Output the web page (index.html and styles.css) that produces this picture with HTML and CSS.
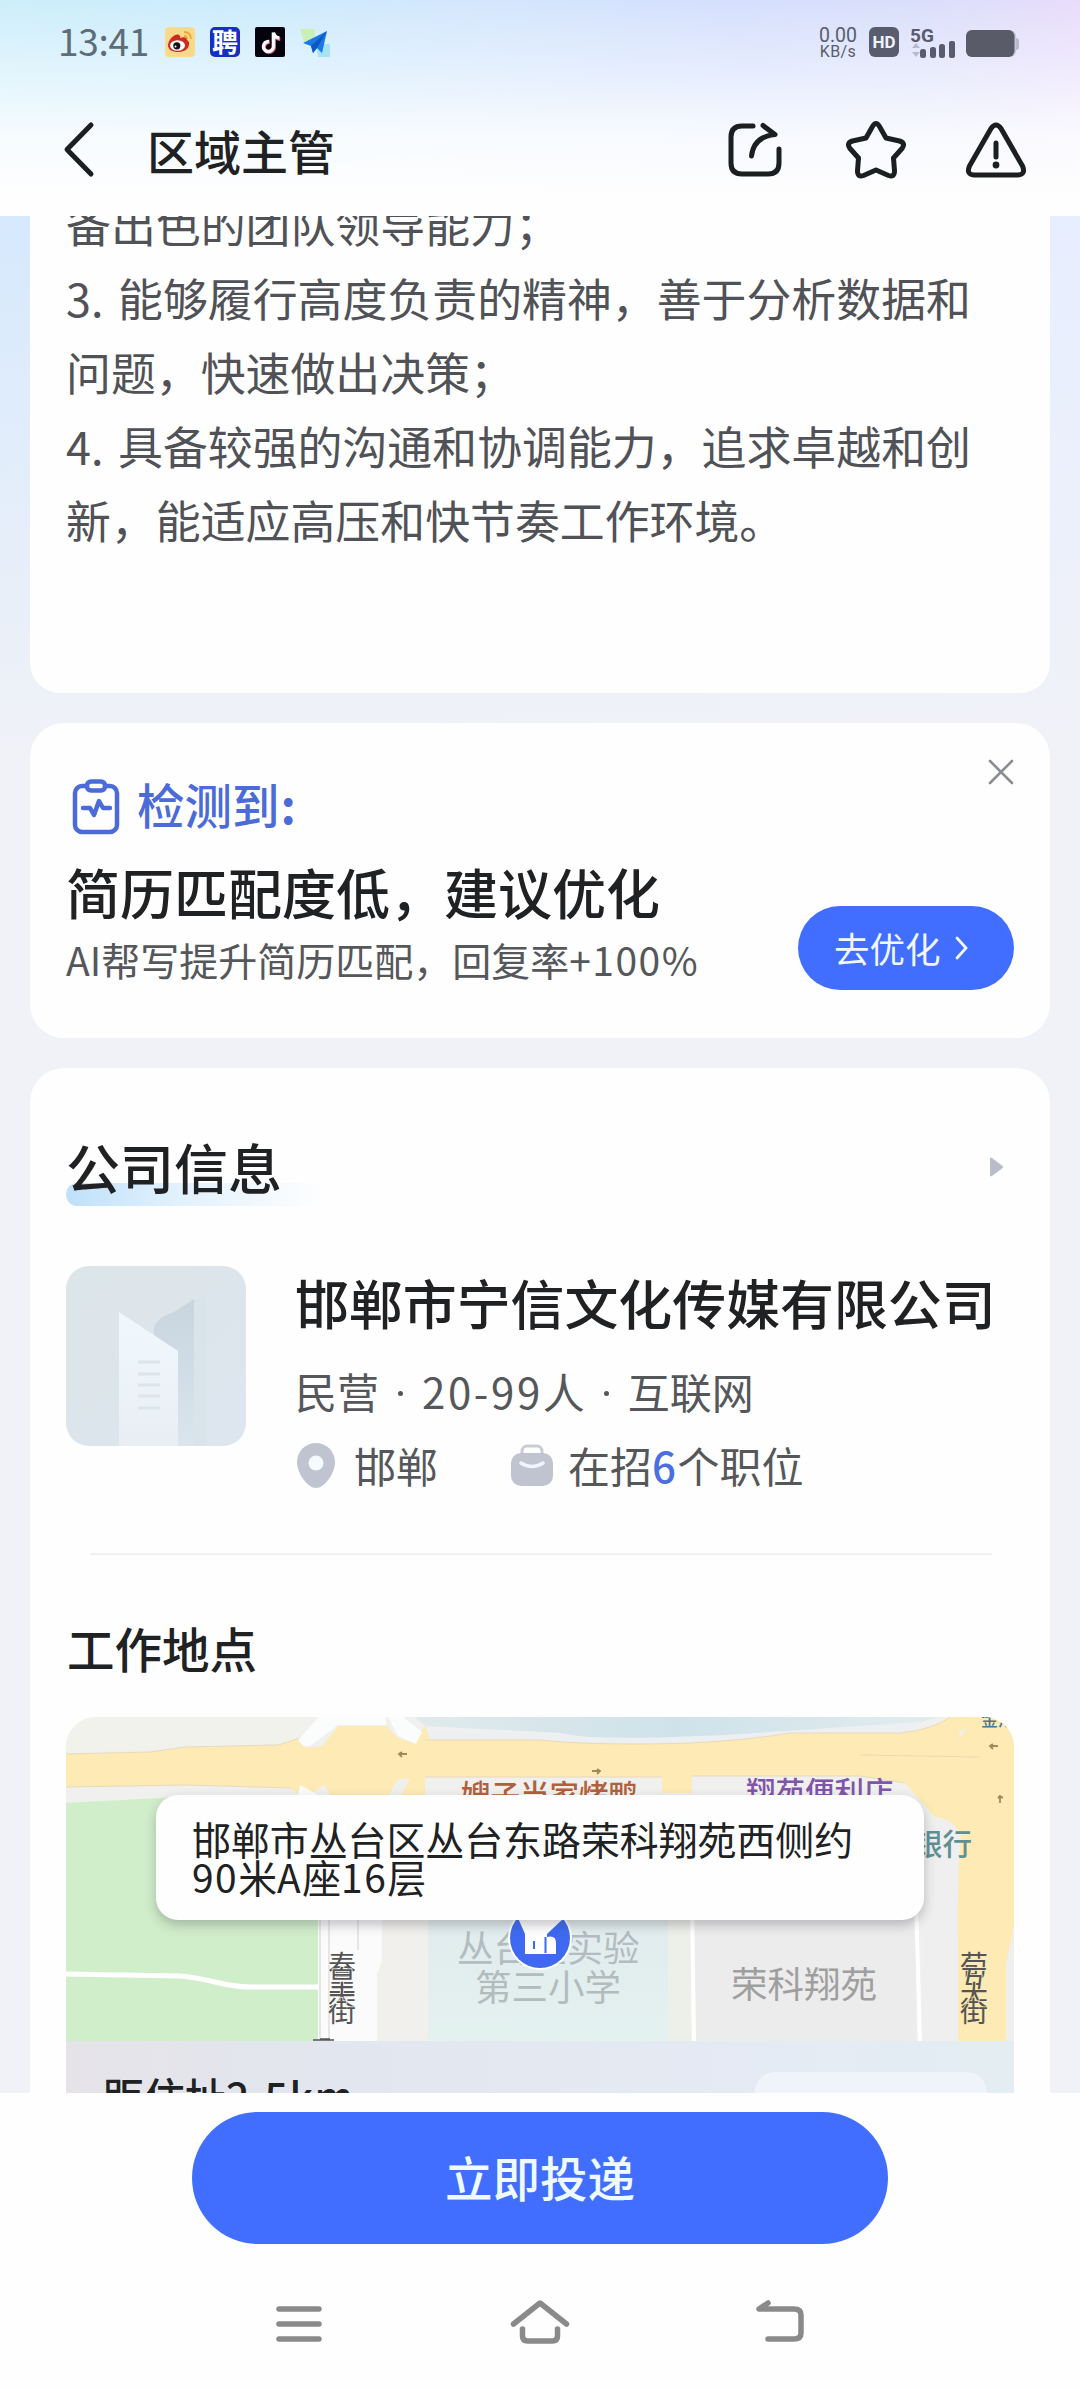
FILE: index.html
```html
<!DOCTYPE html>
<html lang="zh-CN">
<head>
<meta charset="utf-8">
<title>区域主管</title>
<link rel="stylesheet" href="styles.css">
</head>
<body>
<div class="screen">
  <header class="top">
    <div class="status">
      <span class="clock">13:41</span>
      <svg class="app" viewBox="0 0 30 30"><rect width="30" height="30" rx="4" fill="#fbd98b"/><path d="M19 5q7 0 7 7M19 9q3 0 3 3" fill="none" stroke="#f0a63a" stroke-width="1.8"/><path d="M3 18C4 12 10 6 14 8q2 1 1 3 6-2 7 2 3 2 2 5c-1 5-6 7-11 7S3 23 3 18z" fill="#cf2a20"/><ellipse cx="12.5" cy="18.5" rx="7.5" ry="5.2" fill="#fff"/><circle cx="11.8" cy="18.8" r="3.6" fill="#111"/><circle cx="10.5" cy="19.6" r="1" fill="#fff"/></svg>
      <span class="app app-pin">聘</span>
      <svg class="app" viewBox="0 0 30 30"><rect width="30" height="30" rx="2" fill="#04030d"/><g fill="none" stroke-width="3.4"><path d="M14 14.5a5 5 0 1 0 4.4 5V6q1 5 6 5.500" stroke="#f0486a" transform="translate(.9 .8)"/><path d="M14 14.500a5 5 0 1 0 4.400 5V5.500q1 5 6 5.500" stroke="#fff"/></g></svg>
      <svg class="app" viewBox="0 0 30 30"><path d="M0 2h15v15H5z" fill="#c8efb5"/><path d="M16 17h14v13H18z" fill="#a5e3f4"/><path d="M3 16 27 4 22 26 17 21 13 26 11 19z" fill="#1978e6"/><path d="M27 4 11 19 13 26 17 21z" fill="#0d58c0"/></svg>
      <div class="net"><span class="net-num">0.00</span><span class="net-unit">KB/s</span></div>
      <span class="hd">HD</span>
      <svg class="signal" viewBox="0 0 45 31"><text x="-1" y="15" class="g5">5G</text><path d="M1 21l4-5 4 5zM1 25l4 5 4-5z" fill="#b6bacd"/><g fill="#595c6c"><rect x="9" y="22" width="6" height="9" rx="2.500"/><rect x="19" y="20" width="6" height="11" rx="2.500"/><rect x="28" y="17" width="6" height="14" rx="2.500"/><rect x="38" y="14" width="6" height="17" rx="2"/></g></svg>
      <svg class="battery" viewBox="0 0 54 27"><rect x="44" y="8" width="9" height="12" rx="3" fill="#b9bac9"/><rect width="50" height="27" rx="6" fill="#c6c7d8"/><rect width="48.500" height="27" rx="6" fill="#595b68"/></svg>
    </div>
    <div class="nav">
      <svg class="back" viewBox="0 0 34 58"><path d="M29 4 5 28.500 29 53" /></svg>
      <h1>区域主管</h1>
      <svg class="act" viewBox="0 0 62 62"><path d="M28 7H17Q6 7 6 18v26q0 11 11 11h26q11 0 11-11V30M38 6.500 50 15.500C36 17 28 24 26.500 37"/></svg>
      <svg class="act" viewBox="0 0 62 62"><path d="M27.500 7.500Q31 1.500 34.500 7.500L41 19 54.500 22Q61 24 57 29.500L48.500 39 49.500 52Q49.500 58.500 43.500 56.500L31 51 18.500 56.500Q12.500 58.500 12.500 52L13.500 39 5 29.500Q1 24 7.500 22L21 19z"/></svg>
      <svg class="act" viewBox="0 0 62 62"><path d="M26 9.500Q31 2.500 36 9.500L57.500 47Q61 55.500 53 56H9Q1 55.500 4.500 47z"/><path d="M31 24V38" stroke-width="6"/><circle cx="31" cy="46" r="3.400" class="dot"/></svg>
    </div>
  </header>

  <main class="feed">
    <section class="card duty">
      <p>备出色的团队领导能力；</p>
      <p><span class="num">3. </span>能够履行高度负责的精神，善于分析数据和</p>
      <p>问题，快速做出决策；</p>
      <p><span class="num">4. </span>具备较强的沟通和协调能力，追求卓越和创</p>
      <p>新，能适应高压和快节奏工作环境。</p>
    </section>

    <section class="card tip">
      <div class="tip-text">
        <div class="tip-head">
          <svg viewBox="0 0 48 56"><g fill="none" stroke="#4a6bd8" stroke-width="4.500" stroke-linecap="round" stroke-linejoin="round"><rect x="3" y="7" width="42" height="46" rx="7"/><path d="M11 29h7l4 7 5-14 4 7h7" stroke-width="4.500"/><rect x="15" y="2.500" width="18" height="9" rx="4" fill="#fff"/></g></svg>
          <span>检测到<b>:</b></span>
        </div>
        <h2>简历匹配度低，建议优化</h2>
        <p>AI帮写提升简历匹配，回复率<span class="wide">+100%</span></p>
      </div>
      <a class="optimize">去优化<svg viewBox="0 0 14 24"><path d="M2 2 11 12 2 22"/></svg></a>
      <svg class="close" viewBox="0 0 26 26"><path d="M2 2 24 24M24 2 2 24"/></svg>
    </section>

    <section class="card company">
      <div class="sec-head">
        <h2>公司信息</h2>
        <svg viewBox="0 0 15 20"><path d="M1 1.500Q1 0 3 1L13 8.500Q15 10 13 11.500L3 19Q1 20 1 18z" fill="#b9bdca"/></svg>
      </div>
      <div class="firm">
        <svg class="logo" viewBox="0 0 180 180">
          <defs>
            <linearGradient id="lg" x2="1" y2="1"><stop stop-color="#dce5e8"/><stop offset="1" stop-color="#dde5ef"/></linearGradient>
            <linearGradient id="tw" x2="0" y2="1"><stop stop-color="#f0f8fe"/><stop offset="1" stop-color="#e9eef3"/></linearGradient>
            <linearGradient id="sh" x2="0" y2="1"><stop stop-color="#c8d5de"/><stop offset="1" stop-color="#dae5ee"/></linearGradient>
          </defs>
          <rect width="180" height="180" rx="23" fill="url(#lg)"/>
          <path d="M88 62Q90 52 108 46L128 33V180H88z" fill="url(#sh)"/>
          <path d="M128 33 140 30V180H128z" fill="#d8e4ea"/>
          <path d="M53 46 112 85V180H53z" fill="url(#tw)"/>
          <path d="M72 96H94M72 108H94M72 119H94M72 130H94M72 142H94" stroke="#dce4ec" stroke-width="3"/>
        </svg>
        <div class="firm-info">
          <h3>邯郸市宁信文化传媒有限公司</h3>
          <p class="facts">民营<i></i><span class="lat">20-99</span>人<i></i>互联网</p>
          <p class="facts">
            <svg class="pin" viewBox="0 0 38 45"><path d="M19 0A19 19 0 0 1 38 19C38 31 27 45 19 45S0 31 0 19A19 19 0 0 1 19 0z" fill="#bfc4d0"/><circle cx="19" cy="20" r="7.500" fill="#f5faff"/></svg>
            <span class="city">邯郸</span>
            <svg class="bag" viewBox="0 0 42 42"><rect x="11" y="2" width="20" height="14" rx="5" fill="none" stroke="#c9cdd3" stroke-width="3"/><rect y="9" width="42" height="33" rx="10" fill="#bfc4d0"/><path d="M10 19Q21 26 32 19" fill="none" stroke="#eef6fb" stroke-width="3.500" stroke-linecap="round"/></svg>
            <span>在招<em>6</em>个职位</span>
          </p>
        </div>
      </div>
      <hr>
      <h4>工作地点</h4>
      <div class="map">
        <svg class="tiles" viewBox="66 1717 948 324">
          <defs>
            <linearGradient id="wt" x1="0" x2="1"><stop stop-color="#e0eaec"/><stop offset=".5" stop-color="#cfe2ea"/><stop offset="1" stop-color="#e2ecee"/></linearGradient>
            <linearGradient id="sc" x2="0" y2="1"><stop stop-color="#dfe8ec"/><stop offset="1" stop-color="#e3f1ef"/></linearGradient>
          </defs>
          <rect x="66" y="1717" width="948" height="324" fill="#f0f0ef"/>
          <path d="M66 1717H325L298 1742 180 1746 66 1752z" fill="#f2f2ed"/>
          <path d="M415 1717H940L900 1727Q780 1734 730 1738 620 1745 560 1733L425 1726z" fill="url(#wt)"/>
          <path d="M430 1731 560 1735Q620 1741 740 1734L920 1722 900 1735 720 1748H430z" fill="#ecf0f2"/>
          <path d="M66 1803 180 1797H318V2041H66z" fill="#d0eeca"/>
          <path d="M66 1974 180 1976C210 1978 222 1987 250 1987H318" fill="none" stroke="#fff" stroke-width="5"/>
          <rect x="318" y="1800" width="64" height="241" fill="#fbfbfb"/>
          <path d="M320 1800V2041M329 1900V2041M358 1900V1950" stroke="#dedfe2" stroke-width="1.500"/>
          <path d="M382 1800H428V2041H377V1975L382 1960z" fill="#f2f0ed"/>
          <rect x="428" y="1800" width="240" height="241" fill="url(#sc)"/>
          <rect x="668" y="1800" width="22" height="241" fill="#edefe9"/>
          <rect x="695" y="1800" width="221" height="241" fill="#ececec"/>
          <path d="M692 1900 694 2041M916 1900 920 2041" stroke="#fff" stroke-width="4"/>
          <rect x="922" y="1820" width="92" height="221" fill="#efeff0"/>
          <path d="M66 1754 150 1752 185 1747 278 1745 300 1738 306 1748 322 1746 338 1726H387L398 1738 414 1743 425 1725 430 1740H540Q600 1746 690 1743 750 1740 790 1733H900Q935 1729 950 1717H1014V1925Q1009 1952 1006 1965V2041H958V1950Q957 1880 961 1835 952 1818 935 1817 920 1800 905 1783L860 1776H692V1793H662V1777H425V1795H330L325 1785 310 1794H298L290 1788 185 1785 66 1787z" fill="#fdeab4"/>
          <path d="M66 1754 150 1752 185 1747 278 1745 300 1738M66 1787 185 1785 290 1788M425 1740H540Q600 1746 690 1743 750 1740 790 1733H900Q935 1729 950 1717M425 1777H662M692 1776H860L905 1783M860 1755 980 1757" fill="none" stroke="#ead9ba" stroke-width="1"/>
          <path d="M319 1717H337L304 1747 298 1740zM337 1717H386V1725H338L310 1746 304 1746zM388 1717H403L422 1732 416 1744 398 1736zM300 1785 318 1795H298z" fill="#fbfcfc"/>
          <path d="M388 1796 398 1779H410L401 1796zM958 1733 967 1727 961 1737z" fill="#efefec"/>
          <g fill="none" stroke="#9c8a5c" stroke-width="1.800"><path d="M399 1754H407M402 1752 399 1754 402 1757M592 1771H600M597 1769 600 1771 597 1774M990 1746H998M993 1744 990 1746 993 1749M1000 1803V1796M998 1798 1000 1796 1003 1798"/></g>
          <g class="poi">
            <text x="461" y="1806" fill="#b0603c">嫂子当家烤鸭</text>
            <text x="746" y="1803" fill="#8055a8">翔苑便利店</text>
            <text x="913" y="1855" fill="#5f8f92">银行</text>
            <text x="981" y="1726" class="tiny" fill="#4a7690">金港</text>
          </g>
          <g class="area">
            <text x="457" y="1962" fill="#b3bcc0">丛台区实验</text>
            <text x="475" y="2001" fill="#b3bcbd">第三小学</text>
            <text x="731" y="1998" fill="#9f9f9f">荣科翔苑</text>
          </g>
          <g class="street">
            <text x="328" y="1976">春</text><text x="328" y="1991">皇</text><text x="328" y="2006">夫</text><text x="328" y="2022">街</text>
            <g class="gold"><text x="960" y="1976">荀</text><text x="960" y="1991">互</text><text x="960" y="2006">大</text><text x="960" y="2022">街</text></g>
          </g>
          <path d="M313 2040H334M320 2039H330" stroke="#555" stroke-width="1.500"/>
          <circle cx="540" cy="1938" r="32" fill="#fff"/><circle cx="540" cy="1938" r="30" fill="#3e69f0"/>
          <path d="M518 1918H564L547 1934V1937Q556 1935 556 1943V1954H525V1934z" fill="#fff"/><path d="M534 1941V1949M545.500 1937V1953" stroke="#3e69f0" stroke-width="2"/>
        </svg>
        <div class="bubble">邯郸市丛台区丛台东路荣科翔苑西侧约<br><span class="lat">90</span>米<span class="lat">A</span>座<span class="lat">16</span>层</div>
        <div class="distance"><span>距住址<span class="wide">2.5km</span></span><div class="route"></div></div>
      </div>
    </section>
  </main>

  <footer class="bottom">
    <a class="apply">立即投递</a>
    <div class="keys">
      <svg viewBox="0 0 60 48"><path d="M9 11H49M9 26H49M9 41H49"/></svg>
      <svg viewBox="0 0 60 48"><path d="M3.500 26 30 5 56.500 26M12.500 31V38Q12.500 43 17.500 43H42.500Q47.500 43 47.500 38V31"/></svg>
      <svg viewBox="0 0 60 48"><path d="M18 5 9 11H44Q51 11 51 17V35Q51 41 44 41H18"/></svg>
    </div>
  </footer>
</div>
</body>
</html>
```

FILE: styles.css
```css
* { box-sizing: border-box; margin: 0; padding: 0; }
body {
  width: 1080px;
  font-family: "Noto Sans CJK SC", sans-serif;
  color: #202123;
}
h1, h2, h3, h4 { font-weight: 500; }
svg { display: block; flex: none; }
.screen { height: 2388px; display: flex; flex-direction: column; overflow: hidden; background: #fefefe; }

/* status bar and title */
.top {
  height: 216px;
  flex: none;
  background:
    linear-gradient(180deg, rgba(254,254,254,0) 0%, rgba(252,254,255,.5) 38%, rgba(253,254,255,.85) 62%, #fefefe 90%),
    linear-gradient(90deg, #cdeefb 0%, #cdebfd 25%, #d4e6fd 45%, #d5dffd 68%, #dadffb 85%, #e8dcfb 100%);
}
.status { height: 84px; padding: 0 60px 0 58px; display: flex; align-items: center; color: #595c6c; }
.clock { width: 92px; font-size: 37px; line-height: 40px; padding-bottom: 4px; color: #5c6c78; white-space: nowrap; letter-spacing: -.3px; }
.app { width: 30px; height: 30px; margin-left: 15px; }
.app-pin { border-radius: 5px; background: #1430c4; color: #fff; font-weight: 700; font-size: 26px; line-height: 28px; text-align: center; }
.net { margin-left: auto; width: 40px; margin-right: 11px; display: flex; flex-direction: column; align-items: center; padding-top: 1px; }
.net-num { font: 19.500px/17px Roboto, sans-serif; }
.net-unit { font: 16px/15px Roboto, sans-serif; letter-spacing: .4px; }
.hd { width: 30px; height: 30px; border-radius: 6px; background: #595c6c; color: #eef1fb; font: 700 17px/31px Roboto, sans-serif; text-align: center; }
.signal { width: 45px; height: 31px; margin-left: 12px; }
.g5 { font: 700 19px Roboto, sans-serif; fill: #595c6c; }
.battery { width: 54px; height: 27px; margin: 3px 0 0 10px; }
.nav { height: 132px; padding: 0 53px 0 62px; display: flex; align-items: center; }
.nav svg path { fill: none; stroke: #1b1f20; stroke-width: 5; stroke-linecap: round; stroke-linejoin: round; }
.nav svg .dot { fill: #1b1f20; }
.back { width: 34px; height: 58px; }
h1 { flex: 1; margin-left: 51px; font-size: 47px; line-height: 60px; }
.act { width: 62px; height: 62px; margin-left: 58px; }

/* scrolling cards */
.feed {
  height: 1877px;
  flex: none;
  overflow: hidden;
  padding: 0 30px;
  display: flex;
  flex-direction: column;
  gap: 30px;
  background: linear-gradient(180deg, rgba(241,242,247,0) 0, #f1f2f7 560px), linear-gradient(90deg, #d6e9fd, #e7eeff);
}
.card { flex: none; background: #fefefe; border-radius: 34px; }
.duty { height: 477px; padding: 0 36px; border-radius: 0 0 30px 30px; overflow: hidden; color: #505257; font-size: 44.900px; line-height: 74px; white-space: nowrap; }
.duty p:first-child { margin-top: -29px; }
.num { display: inline-block; width: 52px; white-space: pre; }

.tip { position: relative; height: 315px; padding: 57px 36px 48px; display: flex; justify-content: space-between; }
.tip-head { display: flex; align-items: center; height: 54px; padding-left: 6px; color: #4a6bd8; font-size: 47.500px; font-weight: 500; }
.tip-head svg { width: 48px; height: 56px; margin-right: 17px; }
.tip-head span { line-height: 54px; padding-bottom: 7px; }
.tip-head b { margin-left: 1px; }
.tip h2 { margin-top: 25px; font-size: 54px; line-height: 66px; white-space: nowrap; }
.tip p { margin-top: 11px; font-size: 39px; line-height: 46px; color: #55575b; white-space: nowrap; }
.wide { letter-spacing: 1.500px; }
.optimize { align-self: flex-end; width: 216px; height: 84px; border-radius: 42px; background: #416eff; color: #f1f7ff; font-size: 35.500px; display: flex; align-items: center; padding-left: 36px; line-height: 78px; }
.optimize svg { width: 14px; height: 24px; margin-left: 14px; fill: none; stroke: #f1f7ff; stroke-width: 2.800; stroke-linecap: round; }
.close { position: absolute; left: 958px; top: 36px; width: 26px; height: 26px; stroke: #8b8d92; stroke-width: 2.600; stroke-linecap: round; }

.company { padding: 66px 36px 0; }
.sec-head { display: flex; justify-content: space-between; align-items: center; height: 66px; padding-right: 10px; }
.sec-head h2 { position: relative; z-index: 0; font-size: 54px; line-height: 66px; }
.sec-head h2::before { content: ""; position: absolute; z-index: -1; left: 0; top: 49px; width: 256px; height: 23px; border-radius: 12px; background: linear-gradient(90deg, #bfe0fa, #dff0fd 40%, rgba(254,254,254,0)); }
.sec-head svg { width: 15px; height: 20px; }
.firm { display: flex; gap: 49px; margin-top: 66px; height: 224px; }
.logo { width: 180px; height: 180px; }
h3 { font-size: 53.900px; line-height: 66px; white-space: nowrap; margin-top: 3px; }
.facts { display: flex; align-items: center; font-size: 42px; line-height: 50px; color: #55575b; white-space: nowrap; margin-top: 31px; height: 50px; }
.facts + .facts { margin-top: 24px; }
.facts i { width: 5px; height: 5px; margin: 4px 19px 0; border-radius: 50%; background: #55575b; }
.lat { letter-spacing: 1.500px; }
.facts .lat { letter-spacing: 2.600px; }
.pin { width: 38px; height: 45px; margin-left: 2px; }
.city { margin-left: 19px; width: 139px; }
.bag { width: 42px; height: 42px; margin: 0 15px 0 18px; }
em { font-style: normal; font-weight: 500; color: #4a6fe3; letter-spacing: 1.500px; }
hr { border: 0; height: 2px; margin: 63px 22px 0 24px; background: #f0f1f2; }
h4 { margin: 63px 0 0 1px; font-size: 47.500px; line-height: 60px; }

.map { position: relative; margin-top: 39px; height: 420px; border-radius: 30px; overflow: hidden; }
.tiles { width: 948px; height: 324px; }
.poi { font-size: 29.500px; font-weight: 500; }
.tiny { font-size: 17px; }
.area { font-size: 36.500px; }
.street { font-size: 28px; fill: #555; paint-order: stroke; stroke: #fbfbfb; stroke-width: 1.500px; }
.street .gold { stroke: #fdeab4; }
.bubble { position: absolute; left: 90px; top: 78px; width: 768px; height: 125px; border-radius: 22px; background: #fefefe; box-shadow: 0 5px 12px rgba(60,60,70,.3); padding: 24px 36px; font-size: 38.900px; line-height: 38px; white-space: nowrap; }
.distance { height: 96px; padding: 26px 27px 0 37px; display: flex; justify-content: space-between; background: linear-gradient(90deg, #e5e3e8, #e2e7f0 35%, #e5ebf4 75%, #e3edf2); font-size: 41px; font-weight: 500; line-height: 56px; }
.route { width: 232px; height: 80px; margin-top: 5px; border-radius: 20px; background: #eef4fa; }

/* apply bar and system keys */
.bottom { flex: 1; display: flex; flex-direction: column; align-items: center; padding-top: 19px; background: #fefefe; }
.apply { width: 696px; height: 132px; border-radius: 66px; background: #416eff; color: #effaff; font-size: 47.500px; font-weight: 500; line-height: 130px; text-align: center; }
.keys { width: 540px; margin-top: 54px; display: flex; justify-content: space-between; }
.keys svg { width: 60px; height: 48px; fill: none; stroke: #8a8a8a; stroke-width: 5.500; stroke-linecap: round; stroke-linejoin: round; }
```
